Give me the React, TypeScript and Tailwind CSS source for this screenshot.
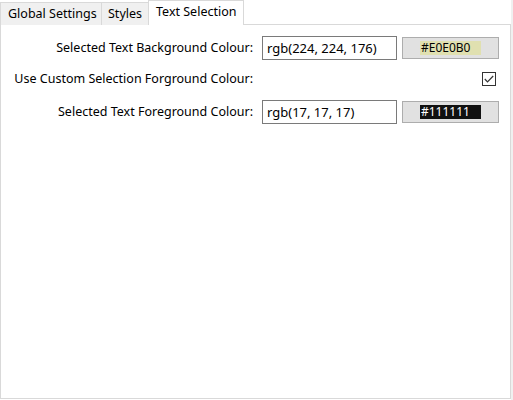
import React from "react";

export default function App() {
  const font = { fontFamily: '"Noto Sans", "Open Sans", sans-serif' };
  return (
    <div
      className="relative w-[513px] h-[400px] bg-[#f0f0f0] text-[12.5px] text-black leading-none"
      style={font}
    >
      <div className="w-[511px] h-[400px] bg-white flex flex-col">
        {/* Tabs */}
        <div className="flex items-end h-[25px] relative z-10">
          <div className="h-[23px] w-[102px] bg-[#f0f0f0] border border-b-0 border-[#d9d9d9] flex items-center pl-[7px]">
            Global Settings
          </div>
          <div className="h-[23px] w-[48px] -ml-px bg-[#f0f0f0] border border-b-0 border-[#d9d9d9] flex items-center pl-[6px]">
            Styles
          </div>
          <div className="h-[25px] w-[96px] -ml-px bg-white border border-b-0 border-[#d9d9d9] flex items-start pt-[5px] pl-[7px]">
            Text Selection
          </div>
        </div>
        {/* Panel */}
        <div className="-mt-px h-[375px] border border-[#d9d9d9] bg-white flex flex-col pt-[11px]">
          <div className="flex items-center h-[24px]">
            <div className="w-[252px] text-right">Selected Text Background Colour:</div>
            <div className="ml-[9px] w-[135px] h-[24px] border border-[#7a7a7a] bg-white flex items-center pl-[4px] text-[13px]">
              rgb(224, 224, 176)
            </div>
            <div className="ml-[5px] w-[97px] h-[22px] border border-[#adadad] bg-[#e1e1e1] flex items-center justify-center">
              <span className="inline-block w-[61px] h-[14px] bg-[#e0e0b0] pl-[1px] leading-[14px] text-[12px]">#E0E0B0</span>
            </div>
          </div>
          <div className="flex items-center h-[40px]">
            <div className="w-[252px] text-right -mt-[2px]">Use Custom Selection Forground Colour:</div>
            <div className="ml-[229px] -mt-[3px] w-[14px] h-[14px] border border-[#333333] bg-white flex items-center justify-center">
              <svg width="10" height="8" viewBox="0 0 10 8">
                <path d="M0.8 4 L3.5 6.8 L9.2 1" fill="none" stroke="#333333" strokeWidth="1.2" />
              </svg>
            </div>
          </div>
          <div className="flex items-center h-[24px]">
            <div className="w-[252px] text-right">Selected Text Foreground Colour:</div>
            <div className="ml-[9px] w-[135px] h-[24px] border border-[#7a7a7a] bg-white flex items-center pl-[4px] text-[13px]">
              rgb(17, 17, 17)
            </div>
            <div className="ml-[5px] w-[97px] h-[22px] border border-[#adadad] bg-[#e1e1e1] flex items-center justify-center">
              <span className="inline-block w-[61px] h-[14px] bg-[#111111] text-white pl-[1px] leading-[14px] text-[12px]">#111111</span>
            </div>
          </div>
        </div>
      </div>
    </div>
  );
}
